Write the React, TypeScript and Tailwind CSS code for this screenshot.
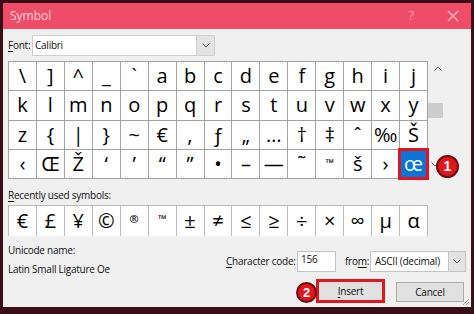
import React from "react";

const GRID_ROWS: string[][] = [
  ["\\", "]", "^", "_", "`", "a", "b", "c", "d", "e", "f", "g", "h", "i", "j"],
  ["k", "l", "m", "n", "o", "p", "q", "r", "s", "t", "u", "v", "w", "x", "y"],
  ["z", "{", "|", "}", "~", "€", "‚", "ƒ", "„", "…", "†", "‡", "ˆ", "‰", "Š"],
  ["‹", "Œ", "Ž", "‘", "’", "“", "”", "•", "–", "—", "˜", "™", "š", "›", "œ"],
];

const RECENT = ["€", "£", "¥", "©", "®", "™", "±", "≠", "≤", "≥", "÷", "×", "∞", "µ", "α"];

// glyphs that Calibri draws small and raised
const SMALL_HIGH = ["®", "™"];

const Chevron: React.FC<{ up?: boolean; className?: string }> = ({ up = false, className = "" }) => (
  <svg width="8" height="5" viewBox="0 0 8 5" className={className}>
    <path
      d={up ? "M0.5 4.5L4 1L7.5 4.5" : "M0.5 0.5L4 4L7.5 0.5"}
      fill="none"
      stroke="#606060"
      strokeWidth="1"
    />
  </svg>
);

const Badge: React.FC<{ n: string; className: string }> = ({ n, className }) => (
  <div
    className={`absolute rounded-full bg-[#e2141c] border-[2px] border-[#6e0b0f] flex items-center justify-center text-white font-bold tracking-normal font-['Liberation_Sans',sans-serif] ${className}`}
  >
    {n}
  </div>
);

const SymbolCell: React.FC<{ ch: string; selected?: boolean }> = ({ ch, selected = false }) => {
  const small = SMALL_HIGH.includes(ch);
  if (selected) {
    return (
      <div className="relative bg-[#0b74d6] flex items-center justify-center text-white text-[20px]">
        <span className="absolute -inset-[2px] border-[3px] border-[#e3141b]" />
        {ch}
      </div>
    );
  }
  return (
    <div
      className={`bg-white flex justify-center text-black ${
        small ? "items-start pt-[5px] text-[11px] font-semibold" : "items-center text-[20px]"
      }`}
    >
      {ch}
    </div>
  );
};

export default function App() {
  return (
    <div className="w-[474px] h-[314px] bg-[#3a0e16] pt-[3px] px-[3px] pb-[7px] font-['Open_Sans',sans-serif] text-[10px] text-[#111] whitespace-nowrap">
      <div className="relative h-full flex flex-col bg-[#f0f0f0]">
        {/* title bar */}
        <div className="h-[26px] bg-[#ef4c68] flex items-center pl-[7px] text-[#fcd3da] text-[12px]">
          <span>Symbol</span>
          <span className="ml-auto mr-[33px] text-[13px] text-[#f9aab8]">?</span>
          <svg width="12" height="12" viewBox="0 0 12 12" className="mr-[12px]">
            <path d="M1 1L11 11M11 1L1 11" stroke="#fbc1cb" strokeWidth="1.3" />
          </svg>
        </div>

        <div className="flex flex-col pl-[5px] tracking-[-0.25px]">
          {/* font row */}
          <div className="mt-[6px] h-[21px] flex items-center">
            <span className="w-[24px]">
              <span className="underline underline-offset-2">F</span>ont:
            </span>
            <div className="h-full w-[165px] bg-white border border-[#cfcfcf] flex items-center pl-[2px]">
              Calibri
            </div>
            <div className="h-full w-[18px] bg-[#e3e3e3] border border-[#cfcfcf] border-l-0 flex items-center justify-center">
              <Chevron />
            </div>
          </div>

          {/* symbol grid + scrollbar */}
          <div className="mt-[5px] h-[118px] flex tracking-normal">
            <div className="grid w-[420px] h-full grid-cols-[repeat(15,minmax(0,1fr))] grid-rows-4 gap-px bg-[#a3a3a3] p-px">
              {GRID_ROWS.flat().map((ch, i) => (
                <SymbolCell key={i} ch={ch} selected={ch === "œ"} />
              ))}
            </div>
            <div className="w-[17px] h-full flex flex-col items-center">
              <div className="h-[15px] flex items-center justify-center pl-[3px]">
                <Chevron up />
              </div>
              <div className="mt-[27px] w-[15px] h-[15px] bg-[#cdcdcd] mr-[2px]" />
              <div className="flex-1" />
              <div className="h-[17px] flex items-start justify-center pr-[4px]">
                <Chevron />
              </div>
            </div>
          </div>

          {/* recently used */}
          <div className="mt-[8px] h-[16px] leading-[16px]">
            <span className="underline underline-offset-2">R</span>ecently used symbols:
          </div>
          <div className="mt-[2px] grid w-[420px] h-[31px] grid-cols-[repeat(15,minmax(0,1fr))] gap-px bg-[#b9b9b9] p-px tracking-normal">
            {RECENT.map((ch, i) => (
              <SymbolCell key={i} ch={ch} />
            ))}
          </div>

          {/* bottom area */}
          <div className="mt-[6px] flex">
            <div className="w-[218px] flex flex-col">
              <div className="h-[16px] leading-[16px]">Unicode name:</div>
              <div className="mt-[3px] h-[16px] leading-[16px]">Latin Small Ligature Oe</div>
            </div>
            <div className="flex flex-col">
              <div className="mt-[9px] h-[21px] flex items-center">
                <span className="w-[71px]">
                  <span className="underline underline-offset-2">C</span>haracter code:
                </span>
                <div className="h-full w-[39px] bg-white border border-[#c4c4c4] pl-[3px] leading-[15px]">
                  156
                </div>
                <span className="ml-[9px] w-[25px]">
                  fro<span className="underline underline-offset-2">m</span>:
                </span>
                <div className="h-full w-[79px] bg-white border border-[#c4c4c4] flex items-center pl-[4px]">
                  ASCII (decimal)
                </div>
                <div className="h-full w-[17px] bg-[#e3e3e3] border border-[#c4c4c4] border-l-0 flex items-center justify-center">
                  <Chevron />
                </div>
              </div>
              <div className="mt-[7px] flex items-start pl-[90px] gap-[11px]">
                <div className="w-[69px] h-[24px] bg-[#e1e1e1] border-[3px] border-[#e2161e] flex items-center justify-center">
                  <span>
                    <span className="underline underline-offset-2">I</span>nsert
                  </span>
                </div>
                <div className="mt-[3px] w-[68px] h-[20px] bg-[#e1e1e1] border border-[#adadad] flex items-center justify-center">
                  Cancel
                </div>
              </div>
            </div>
          </div>
        </div>

        <Badge n="1" className="left-[433px] top-[152px] w-[23px] h-[23px] text-[14px]" />
        <Badge n="2" className="left-[293px] top-[279px] w-[21px] h-[21px] text-[13px]" />

        {/* resize grip */}
        <svg width="8" height="8" viewBox="0 0 8 8" className="absolute right-[1px] bottom-[1px]">
          <path d="M7 1L1 7M7 4L4 7" stroke="#a8a8a8" strokeWidth="1" />
        </svg>
      </div>
    </div>
  );
}
